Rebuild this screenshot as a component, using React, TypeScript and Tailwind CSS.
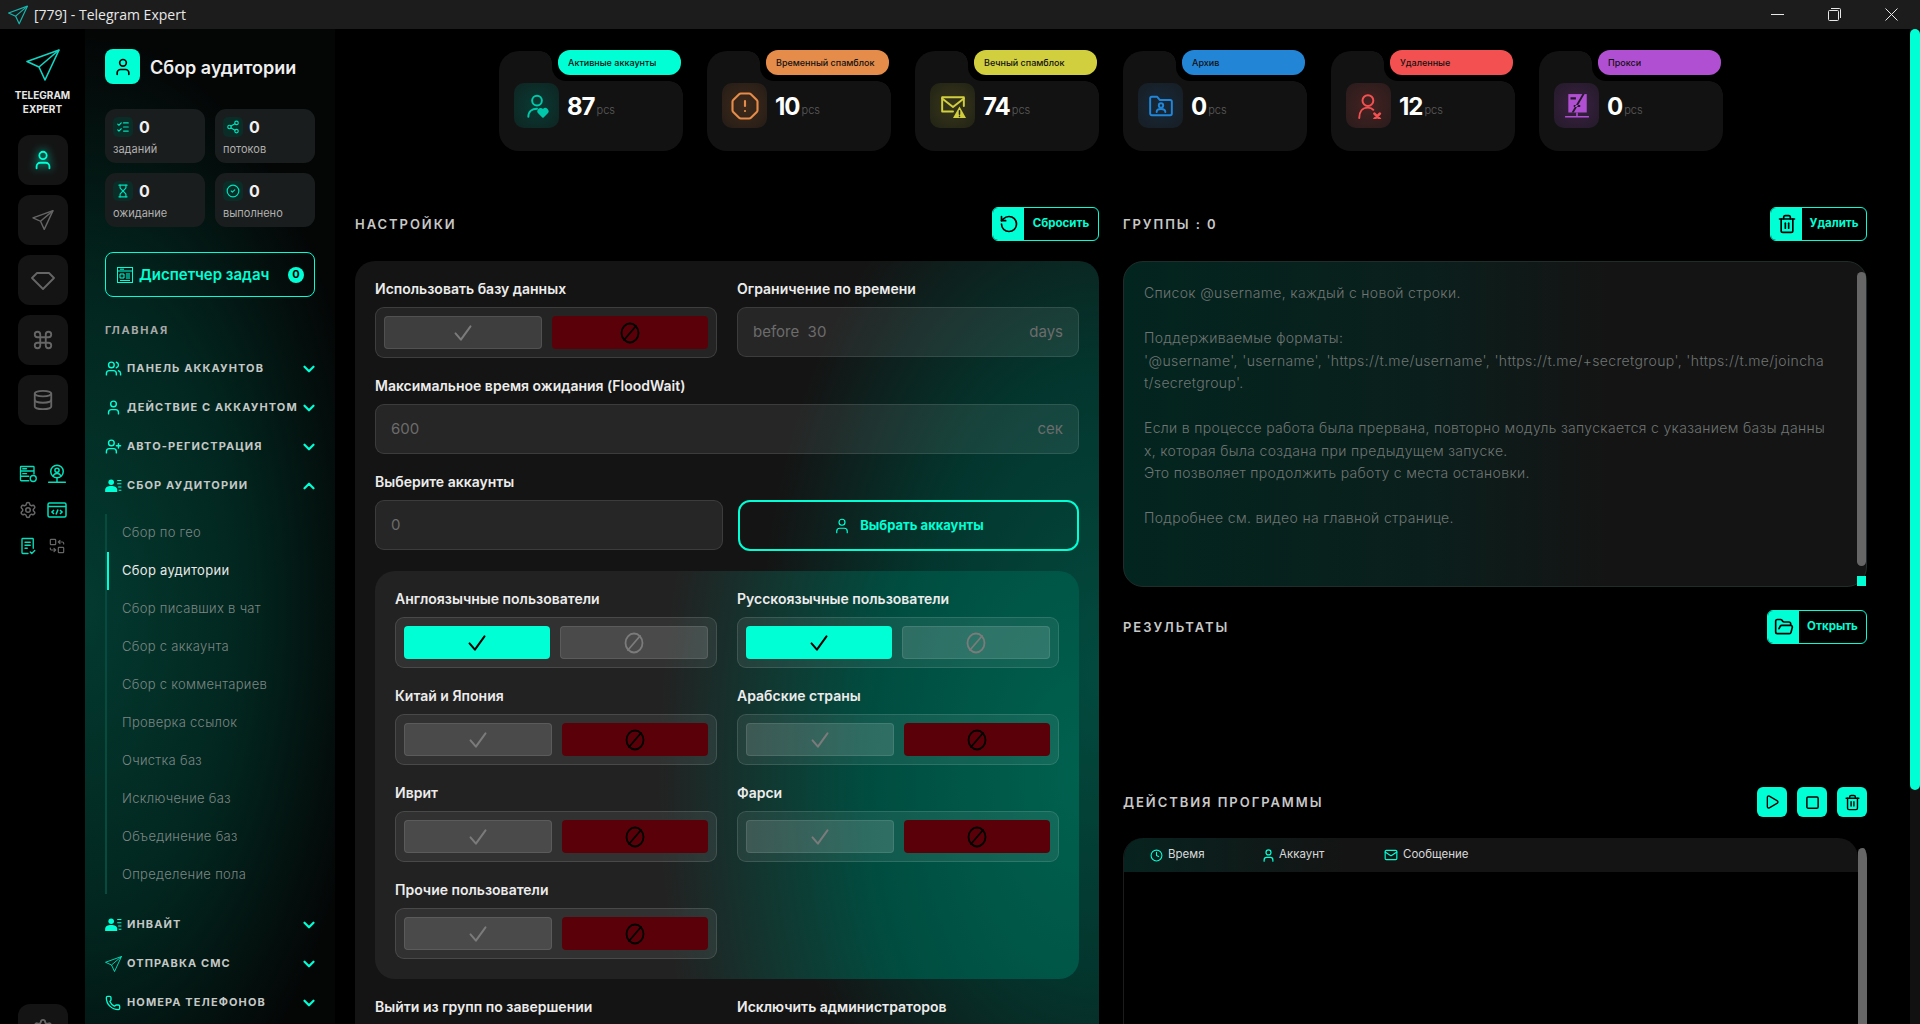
import { ReactNode } from "react";
import {
  ChevronDown,
  ChevronUp,
  CircleCheck,
  Clock,
  Command,
  Database,
  FolderOpen,
  Hourglass,
  ListChecks,
  Mail,
  OctagonAlert,
  Phone,
  Play,
  RotateCcw,
  Settings,
  Share2,
  Square,
  Trash2,
  User,
  UserPlus,
  Users,
} from "lucide-react";

function Plane({ className, strokeWidth = 1.6 }: { className?: string; strokeWidth?: number }) {
  return (
    <svg viewBox="0 0 34 32" fill="none" stroke="currentColor" strokeWidth={strokeWidth} strokeLinejoin="round" className={className}>
      <path d="M33 1 1 12.5 13 18l6 13L33 1Z" />
      <path d="M33 1 13 18" />
    </svg>
  );
}

function Ico({ children, className }: { children: ReactNode; className?: string }) {
  return (
    <svg viewBox="0 0 24 24" fill="none" stroke="currentColor" strokeWidth={1.8} strokeLinecap="round" strokeLinejoin="round" className={className}>
      {children}
    </svg>
  );
}

function BanIcon({ className }: { className?: string }) {
  return (
    <Ico className={className}>
      <ellipse cx="12" cy="12" rx="8.5" ry="9.5" />
      <path d="M18 5 6 19" />
    </Ico>
  );
}

function CheckIcon({ className }: { className?: string }) {
  return (
    <svg viewBox="0 0 24 24" fill="none" stroke="currentColor" strokeWidth={2.4} strokeLinecap="round" strokeLinejoin="round" className={className}>
      <path d="M3 12.5 9.5 20 21 4" />
    </svg>
  );
}

function UserList({ className }: { className?: string }) {
  return (
    <svg viewBox="0 0 18 14" fill="currentColor" className={className}>
      <circle cx="6.5" cy="3.5" r="3" />
      <path d="M0 14v-2.5C0 9 2.5 7.5 6.5 7.5S13 9 13 11.5V14Z" />
      <path d="M13 1h4.5v1.2H13zM13 4.5h4.5v1.2H13zM14 8h3.5v1.2H14zM14.5 11.5h3v1.2h-3z" />
    </svg>
  );
}

const stats = [
  {
    label: "Активные аккаунты",
    value: "87",
    pill: "bg-[#00ffd5]",
    box: "bg-[radial-gradient(circle,#0a3a33,#0e2422)]",
    color: "text-[#00c8aa]",
    icon: (
      <Ico>
        <circle cx="12" cy="7" r="4.5" />
        <path d="M4 22c0-5 3.5-7.5 8-7.5" />
        <path fill="currentColor" d="M17.5 22l-3.6-3.6a2.1 2.1 0 0 1 3-3l.6.6.6-.6a2.1 2.1 0 0 1 3 3Z" />
      </Ico>
    ),
  },
  {
    label: "Временный спамблок",
    value: "10",
    pill: "bg-[#e58c4a]",
    box: "bg-[radial-gradient(circle,#3f2a1a,#241c17)]",
    color: "text-[#e58c4a]",
    icon: <OctagonAlert strokeWidth={1.7} className="-m-[2px] h-[30px] w-[30px]" />,
  },
  {
    label: "Вечный спамблок",
    value: "74",
    pill: "bg-[#d2cf3f]",
    box: "bg-[radial-gradient(circle,#37371a,#222216)]",
    color: "text-[#d2cf3f]",
    icon: (
      <Ico>
        <path d="M12 17H2V4h20v8" />
        <path d="m2 5 10 8 10-8" />
        <path fill="currentColor" stroke="none" d="M18 12.5 24 23H12Z" />
        <path stroke="#222216" strokeWidth={1.4} d="M18 16.5v3M18 21.5v.2" />
      </Ico>
    ),
  },
  {
    label: "Архив",
    value: "0",
    pill: "bg-[#2285d6]",
    box: "bg-[radial-gradient(circle,#17293a,#171d23)]",
    color: "text-[#2285d6]",
    icon: (
      <Ico>
        <path d="M2 5a1.5 1.5 0 0 1 1.5-1.5h5l2.5 3h9.5A1.5 1.5 0 0 1 22 8v11a1.5 1.5 0 0 1-1.5 1.5h-17A1.5 1.5 0 0 1 2 19Z" />
        <circle cx="12" cy="11.5" r="2" />
        <path d="M8 17.5c0-2 1.5-2.8 4-2.8s4 .8 4 2.8" />
      </Ico>
    ),
  },
  {
    label: "Удаленные",
    value: "12",
    pill: "bg-[#f35151]",
    box: "bg-[radial-gradient(circle,#452222,#291b1b)]",
    color: "text-[#f35151]",
    icon: (
      <Ico>
        <circle cx="11" cy="7" r="5" />
        <path d="M3 23c0-6 3-9.500 8-9.500 2.500 0 4 .8 5 2" />
        <path strokeWidth={2.4} d="m17 19 5 5M22 19l-5 5" />
      </Ico>
    ),
  },
  {
    label: "Прокси",
    value: "0",
    pill: "bg-[#b14fd3]",
    box: "bg-[radial-gradient(circle,#3a2143,#241a29)]",
    color: "text-[#b14fd3]",
    icon: (
      <svg viewBox="0 0 24 24" fill="currentColor">
        <path d="M4 1h17v17H4Z" />
        <path fill="#241a29" d="M6 4h5v2H6zM9 11h6v2H9zM17 1l-10 17h2L19 1Z" />
        <path stroke="currentColor" strokeWidth="1.4" d="M1 22h22M12 18v4" />
      </svg>
    ),
  },
];

const tiles = [
  { value: "0", label: "заданий", icon: <ListChecks className="h-[14px] w-[14px]" /> },
  { value: "0", label: "потоков", icon: <Share2 className="h-[14px] w-[14px]" /> },
  { value: "0", label: "ожидание", icon: <Hourglass className="h-[14px] w-[14px]" /> },
  { value: "0", label: "выполнено", icon: <CircleCheck className="h-[14px] w-[14px]" /> },
];

const subItems = [
  "Сбор по гео",
  "Сбор аудитории",
  "Сбор писавших в чат",
  "Сбор с аккаунта",
  "Сбор с комментариев",
  "Проверка ссылок",
  "Очистка баз",
  "Исключение баз",
  "Объединение баз",
  "Определение пола",
];

function TitleBar() {
  return (
    <div className="flex h-[29px] shrink-0 items-center bg-[#1c1c1c] pl-[8px] font-['Open_Sans',sans-serif]">
      <Plane className="h-[20px] w-[20px] text-[#17b6ad]" strokeWidth={2} />
      <span className="ml-[6px] text-[14px] text-[#e8e8e8]">[779] - Telegram Expert</span>
      <div className="ml-auto flex text-[#e8e8e8]">
        <div className="flex h-[29px] w-[57px] items-center justify-center">
          <div className="h-px w-[13px] bg-[#e8e8e8]" />
        </div>
        <div className="flex h-[29px] w-[57px] items-center justify-center">
          <svg viewBox="0 0 13 13" fill="none" stroke="currentColor" className="h-[13px] w-[13px]">
            <rect x="0.5" y="2.500" width="10" height="10" rx="1" />
            <path d="M3 .5h8.500a1 1 0 0 1 1 1V10" />
          </svg>
        </div>
        <div className="flex h-[29px] w-[57px] items-center justify-center">
          <svg viewBox="0 0 13 13" stroke="currentColor" className="h-[13px] w-[13px]">
            <path d="m.5.5 12 12M12.500.5l-12 12" />
          </svg>
        </div>
      </div>
    </div>
  );
}

function RailButton({ children }: { children: ReactNode }) {
  return (
    <div className="flex h-[50px] w-[50px] shrink-0 items-center justify-center rounded-[12px] bg-[#141414] text-[#666666]">
      {children}
    </div>
  );
}

function Rail() {
  return (
    <div className="flex w-[85px] shrink-0 flex-col items-center overflow-hidden bg-black pt-[20px]">
      <Plane className="h-[32px] w-[34px] shrink-0 text-[#12d6c4]" />
      <div className="mt-[7px] shrink-0 text-center text-[10px] leading-[14px] font-bold text-[#e6e6e6]">
        TELEGRAM
        <br />
        EXPERT
      </div>
      <div className="mt-[19px] flex shrink-0 flex-col gap-[10px]">
        <RailButton>
          <User className="h-[22px] w-[22px] text-[#00ffd5] drop-shadow-[0_0_5px_#00ffd5]" />
        </RailButton>
        <RailButton>
          <Plane className="h-[20px] w-[22px]" strokeWidth={2.2} />
        </RailButton>
        <RailButton>
          <Ico className="h-[24px] w-[24px]">
            <path d="M6 5h12l5 5-11 11L1 10Z" />
          </Ico>
        </RailButton>
        <RailButton>
          <Command className="h-[22px] w-[22px]" />
        </RailButton>
        <RailButton>
          <Database className="h-[22px] w-[22px]" />
        </RailButton>
      </div>
      <div className="mt-[31px] grid shrink-0 grid-cols-[28px_28px] justify-center gap-x-px">
        <div className="flex h-[36px] items-center justify-center text-[#00e0bb]">
          <Ico className="h-[18px] w-[18px]">
            <rect x="2" y="2" width="18" height="6" rx="1" />
            <path d="M20 12V8M2 8v6a1 1 0 0 0 1 1h10M2 15v5a1 1 0 0 0 1 1h10M5 5h5M5 11.500h5" />
            <circle cx="19" cy="18" r="4" />
          </Ico>
        </div>
        <div className="flex h-[36px] items-center justify-center text-[#00e0bb]">
          <Ico className="h-[20px] w-[20px]">
            <circle cx="12" cy="9" r="7.500" />
            <circle cx="12" cy="7.500" r="2.500" />
            <path d="M7.500 14c1-2 2.500-2.500 4.500-2.500s3.500.5 4.500 2.500M12 17v4M2 22h20" />
          </Ico>
        </div>
        <div className="flex h-[36px] items-center justify-center text-[#666666]">
          <Settings className="h-[18px] w-[18px]" />
        </div>
        <div className="flex h-[36px] items-center justify-center text-[#00e0bb]">
          <svg viewBox="0 0 20 16" fill="none" stroke="currentColor" strokeWidth={1.5} className="h-[16px] w-[20px]">
            <rect x="1" y="1" width="18" height="14" rx="1.500" />
            <path d="M1 4.500h18" />
            <path strokeWidth={1.6} d="M7 8 5 10l2 2M13 8l2 2-2 2M11 7.500l-2 5" />
          </svg>
        </div>
        <div className="flex h-[36px] items-center justify-center text-[#00e0bb]">
          <Ico className="h-[18px] w-[18px]">
            <path d="M12 22H5a1 1 0 0 1-1-1V3a1 1 0 0 1 1-1h13a1 1 0 0 1 1 1v12" />
            <path d="M8 7h7M8 11h7M8 15h3M15 20l2 2 4-4" />
          </Ico>
        </div>
        <div className="flex h-[36px] items-center justify-center text-[#666666]">
          <Ico className="h-[16px] w-[16px]">
            <rect x="2" y="2" width="8" height="8" rx="1" />
            <rect x="14" y="14" width="8" height="8" rx="1" />
            <path d="M14 6h6a2 2 0 0 1 2 2v1M14 6l2.500-2.500M14 6l2.500 2.500M10 18H4a2 2 0 0 1-2-2v-1M10 18l-2.500-2.500M10 18l-2.500 2.500" />
          </Ico>
        </div>
      </div>
      <div className="mt-[440px] shrink-0">
        <RailButton>
          <Settings className="h-[22px] w-[22px]" />
        </RailButton>
      </div>
    </div>
  );
}

function MenuRow({ icon, label, open }: { icon: ReactNode; label: string; open?: boolean }) {
  return (
    <div className="flex h-[39px] items-center text-[#00ffd5]">
      <div className="flex w-[22px] shrink-0 items-center">{icon}</div>
      <span className="text-[11px] font-bold tracking-[0.1em] whitespace-nowrap text-[#c4c8c6]">{label}</span>
      <div className="ml-auto">
        {open ? <ChevronUp strokeWidth={3} className="h-[18px] w-[18px]" /> : <ChevronDown strokeWidth={3} className="h-[18px] w-[18px]" />}
      </div>
    </div>
  );
}

function Sidebar() {
  return (
    <div className="w-[250px] shrink-0 bg-[#040606] bg-[radial-gradient(ellipse_290px_570px_at_0%_58%,#033a30_0%,#02261f_55%,#040606_100%)] pt-[20px] pr-[17px] pl-[20px]">
      <div className="flex items-center">
        <div className="flex h-[35px] w-[35px] items-center justify-center rounded-[8px] bg-[#00ffd5] text-black">
          <User className="h-[20px] w-[20px]" />
        </div>
        <span className="mt-[2px] ml-[10px] text-[18px] font-semibold whitespace-nowrap text-[#efefef]">Сбор аудитории</span>
      </div>
      <div className="mt-[25px] grid w-[210px] grid-cols-2 gap-[10px]">
        {tiles.map((t) => (
          <div key={t.label} className="h-[54px] rounded-[11px] bg-[#1a1d1d] px-[8px] pt-[8px]">
            <div className="flex items-center">
              <div className="flex h-[20px] w-[20px] items-center justify-center rounded-[5px] bg-[#0a2d27] text-[#00e0bb]">{t.icon}</div>
              <span className="ml-[6px] text-[16px] leading-[20px] font-bold text-[#f0f0f0]">{t.value}</span>
            </div>
            <div className="mt-[5px] text-[11px] leading-[14px] text-[#b0b0b0]">{t.label}</div>
          </div>
        ))}
      </div>
      <div className="mt-[25px] flex h-[45px] w-[210px] items-center rounded-[8px] border border-[#00ffd5] pr-[10px] pl-[11px] text-[#00ffd5]">
        <svg viewBox="0 0 16 16" fill="none" stroke="currentColor" className="h-[16px] w-[16px]">
          <rect x="0.5" y="0.500" width="15" height="15" />
          <path d="M.5 4h15M3 2.200h4M3 7h4v4H3zM9 7h4M9 9h4M9 11h4M3 13.500h10" />
        </svg>
        <span className="mt-[2px] ml-[6px] text-[15px] font-semibold whitespace-nowrap">Диспетчер задач</span>
        <div className="ml-auto flex h-[16px] w-[16px] items-center justify-center rounded-full bg-[#00ffd5] text-[11px] font-bold text-black">0</div>
      </div>
      <div className="mt-[26px] text-[11px] leading-[14px] font-bold tracking-[0.15em] text-[#a8a8a8]">ГЛАВНАЯ</div>
      <div className="mt-[12px]">
        <MenuRow label="ПАНЕЛЬ АККАУНТОВ" icon={<Users className="h-[17px] w-[17px]" />} />
        <MenuRow label="ДЕЙСТВИЕ С АККАУНТОМ" icon={<User className="h-[17px] w-[17px]" />} />
        <MenuRow label="АВТО-РЕГИСТРАЦИЯ" icon={<UserPlus className="h-[17px] w-[17px]" />} />
        <MenuRow label="СБОР АУДИТОРИИ" open icon={<UserList className="h-[13px] w-[17px]" />} />
      </div>
      <div className="mt-[9px] border-l-2 border-[#074a3e]">
        {subItems.map((s) => (
          <div
            key={s}
            className={
              s === "Сбор аудитории"
                ? "flex h-[38px] items-center border-l-2 border-[#00ffd5] pl-[13px] text-[13px] tracking-[0.3px] whitespace-nowrap text-[#e8e8e8]"
                : "flex h-[38px] items-center border-l-2 border-transparent pl-[13px] text-[13px] font-light tracking-[0.3px] whitespace-nowrap text-[#7d8683]"
            }
          >
            {s}
          </div>
        ))}
      </div>
      <div className="mt-[11px]">
        <MenuRow label="ИНВАЙТ" icon={<UserList className="h-[13px] w-[17px]" />} />
        <MenuRow label="ОТПРАВКА СМС" icon={<Plane className="h-[16px] w-[17px]" />} />
        <MenuRow label="НОМЕРА ТЕЛЕФОНОВ" icon={<Phone className="h-[16px] w-[16px]" />} />
      </div>
    </div>
  );
}

function StatCard({ s }: { s: (typeof stats)[number] }) {
  return (
    <div className="relative h-[100px] w-[184px] shrink-0 rounded-[20px] bg-[#121212] pt-[32px] pl-[15px]">
      <div className="absolute top-0 right-[131px] h-[12px] w-[12px] bg-[radial-gradient(circle_at_0_100%,transparent_11.5px,#000_12px)]" />
      <div className="absolute top-[30px] right-0 h-[14px] w-[14px] bg-[radial-gradient(circle_at_0_100%,transparent_13.5px,#000_14px)]" />
      <div className="absolute -top-px right-0 flex h-[31px] w-[131px] items-start rounded-bl-[14px] bg-black pl-[6px]">
        <div className={"flex h-[25px] w-[123px] items-center rounded-[12px] pl-[10px] text-[9px] font-medium whitespace-nowrap text-[#111111] " + s.pill}>
          {s.label}
        </div>
      </div>
      <div className="flex items-center">
        <div className={"flex h-[45px] w-[45px] items-center justify-center rounded-[10px] " + s.box}>
          <div className={"h-[26px] w-[26px] " + s.color}>{s.icon}</div>
        </div>
        <span className="mt-[2px] ml-[8px] text-[24px] leading-[30px] font-bold tracking-[-1px] text-white">{s.value}</span>
        <span className="mt-[9px] ml-[2px] text-[11px] font-light text-[#5c5c5c]">pcs</span>
      </div>
    </div>
  );
}

function ActionButton({ icon, label, width }: { icon: ReactNode; label: string; width: string }) {
  return (
    <div className={"flex h-[34px] items-center overflow-hidden rounded-[6px] border border-[#00ffd5] " + width}>
      <div className="flex h-full w-[31px] shrink-0 items-center justify-center bg-[#00ffd5] text-black">{icon}</div>
      <span className="flex-1 text-center text-[11.500px] font-bold text-[#00ffd5]">{label}</span>
    </div>
  );
}

function SectionHead({ title, children }: { title: string; children?: ReactNode }) {
  return (
    <div className="flex h-[34px] items-center justify-between">
      <span className="mt-[2px] text-[13px] font-semibold tracking-[0.15em] text-[#c8c8c8]">{title}</span>
      {children}
    </div>
  );
}

function Toggle({ on }: { on?: boolean }) {
  return (
    <div className="flex h-[51px] gap-[10px] rounded-[9px] border border-white/12 bg-white/7 px-[8px] py-[8px]">
      <div
        className={
          on
            ? "flex flex-1 items-center justify-center rounded-[4px] bg-[#00ffd5] text-black"
            : "flex flex-1 items-center justify-center rounded-[4px] border border-white/10 bg-white/12 text-[#7b7b7b]"
        }
      >
        <CheckIcon className="h-[20px] w-[20px]" />
      </div>
      <div
        className={
          on
            ? "flex flex-1 items-center justify-center rounded-[4px] border border-white/10 bg-white/12 text-[#7b7b7b]"
            : "flex flex-1 items-center justify-center rounded-[4px] bg-[#5a0008] text-black"
        }
      >
        <BanIcon className="h-[24px] w-[24px]" />
      </div>
    </div>
  );
}

function Label({ children }: { children: ReactNode }) {
  return <div className="mb-[8px] h-[20px] text-[14px] leading-[20px] font-semibold whitespace-nowrap text-[#ececec]">{children}</div>;
}

function Field({ left, right }: { left: string; right?: string }) {
  return (
    <div className="flex h-[50px] items-center justify-between rounded-[9px] border border-white/10 bg-white/8 px-[15px] text-[15px] text-[#6c6c6c]">
      <span className="whitespace-pre">{left}</span>
      {right && <span>{right}</span>}
    </div>
  );
}

function LangCell({ label, on }: { label: string; on?: boolean }) {
  return (
    <div>
      <Label>{label}</Label>
      <Toggle on={on} />
    </div>
  );
}

function SettingsPanel() {
  return (
    <div className="w-[744px] shrink-0">
      <SectionHead title="НАСТРОЙКИ">
        <ActionButton icon={<RotateCcw className="h-[20px] w-[20px]" />} label="Сбросить" width="w-[107px]" />
      </SectionHead>
      <div className="mt-[20px] rounded-[20px] bg-[#141414] bg-[radial-gradient(ellipse_340px_560px_at_100%_50%,#034a3e_0%,#03352d_55%,#141414_100%)] px-[20px] pt-[18px] pb-[60px]">
        <div className="grid grid-cols-2 gap-x-[20px]">
          <div>
            <Label>Использовать базу данных</Label>
            <Toggle />
          </div>
          <div>
            <Label>Ограничение по времени</Label>
            <Field left="before  30" right="days" />
          </div>
        </div>
        <div className="mt-[18px]">
          <Label>Максимальное время ожидания (FloodWait)</Label>
          <Field left="600" right="сек" />
        </div>
        <div className="mt-[18px]">
          <Label>Выберите аккаунты</Label>
          <div className="flex gap-[15px]">
            <div className="w-[348px]">
              <Field left="0" />
            </div>
            <div className="flex h-[51px] flex-1 items-center justify-center gap-[9px] rounded-[12px] border-2 border-[#00ffd5] text-[13px] font-bold text-[#00ffd5]">
              <User className="h-[18px] w-[18px]" strokeWidth={1.6} />
              Выбрать аккаунты
            </div>
          </div>
        </div>
        <div className="mt-[20px] grid grid-cols-2 gap-x-[20px] gap-y-[18px] rounded-[20px] bg-[#222222] bg-[radial-gradient(ellipse_420px_720px_at_100%_50%,#00614f_0%,#004d40_50%,#222222_100%)] px-[20px] pt-[18px] pb-[20px]">
          <LangCell label="Англоязычные пользователи" on />
          <LangCell label="Русскоязычные пользователи" on />
          <LangCell label="Китай и Япония" />
          <LangCell label="Арабские страны" />
          <LangCell label="Иврит" />
          <LangCell label="Фарси" />
          <LangCell label="Прочие пользователи" />
        </div>
        <div className="mt-[18px] grid grid-cols-2 gap-x-[20px]">
          <Label>Выйти из групп по завершении</Label>
          <Label>Исключить администраторов</Label>
        </div>
      </div>
    </div>
  );
}

function RightColumn() {
  return (
    <div className="ml-[24px] w-[744px] shrink-0">
      <SectionHead title="ГРУППЫ : 0">
        <ActionButton icon={<Trash2 className="h-[20px] w-[20px]" />} label="Удалить" width="w-[97px]" />
      </SectionHead>
      <div className="mt-[20px] flex h-[326px] rounded-[20px] border border-[#1f2d2a] bg-[linear-gradient(90deg,#03251f_0%,#0a1f1c_40%,#141414_65%)]">
        <div className="flex-1 pt-[20px] pl-[20px] text-[14px] leading-[22.5px] font-light tracking-[0.33px] whitespace-pre text-[#6f7573]">
          <div className="h-[22.5px]">Список @username, каждый с новой строки.</div>
          <div className="h-[22.5px]" />
          <div className="h-[22.5px]">Поддерживаемые форматы:</div>
          <div className="h-[22.5px] tracking-[0.37px]">'@username', 'username', 'https://t.me/username', 'https://t.me/+secretgroup', 'https://t.me/joincha</div>
          <div className="h-[22.5px] tracking-[0.37px]">t/secretgroup'.</div>
          <div className="h-[22.5px]" />
          <div className="h-[22.5px]">Если в процессе работа была прервана, повторно модуль запускается с указанием базы данны</div>
          <div className="h-[22.5px]">х, которая была создана при предыдущем запуске.</div>
          <div className="h-[22.5px]">Это позволяет продолжить работу с места остановки.</div>
          <div className="h-[22.5px]" />
          <div className="h-[22.5px]">Подробнее см. видео на главной странице.</div>
        </div>
        <div className="flex w-[9px] flex-col">
          <div className="mt-[10px] h-[295px] rounded-full bg-[#666666]" />
          <div className="mt-[10px] h-[10px] bg-[#00ffd5]" />
        </div>
      </div>
      <div className="mt-[23px]">
        <SectionHead title="РЕЗУЛЬТАТЫ">
          <ActionButton icon={<FolderOpen className="h-[20px] w-[20px]" />} label="Открыть" width="w-[100px]" />
        </SectionHead>
      </div>
      <div className="mt-[143px] flex h-[30px] items-center justify-between">
        <span className="mt-[2px] text-[13px] font-semibold tracking-[0.15em] text-[#c8c8c8]">ДЕЙСТВИЯ ПРОГРАММЫ</span>
        <div className="flex gap-[10px]">
          <div className="flex h-[30px] w-[30px] items-center justify-center rounded-[6px] bg-[#00ffd5] text-black">
            <Play className="h-[16px] w-[16px]" />
          </div>
          <div className="flex h-[30px] w-[30px] items-center justify-center rounded-[6px] bg-[#00ffd5] text-black">
            <Square className="h-[15px] w-[15px]" strokeWidth={2.4} />
          </div>
          <div className="flex h-[30px] w-[30px] items-center justify-center rounded-[6px] bg-[#00ffd5] text-black">
            <Trash2 className="h-[17px] w-[17px]" />
          </div>
        </div>
      </div>
      <div className="mt-[21px] flex h-[400px] overflow-hidden rounded-t-[20px] border-l border-[#1c1c1c]">
        <div className="flex-1">
          <div className="flex h-[34px] items-center rounded-tr-[20px] bg-[linear-gradient(90deg,#07231f_0%,#141414_30%)] text-[11.500px] text-[#d8d8d8]">
            <div className="flex w-[137px] items-center pl-[26px]">
              <Clock className="h-[13px] w-[13px] text-[#00ffd5]" />
              <span className="ml-[5px]">Время</span>
            </div>
            <div className="flex w-[123px] items-center">
              <User className="h-[15px] w-[15px] text-[#00ffd5]" />
              <span className="ml-[3px]">Аккаунт</span>
            </div>
            <div className="flex items-center">
              <Mail className="h-[14px] w-[14px] text-[#00ffd5]" />
              <span className="ml-[5px]">Сообщение</span>
            </div>
          </div>
        </div>
        <div className="mt-[10px] w-[9px] rounded-full bg-[#666666]" />
      </div>
    </div>
  );
}

export default function App() {
  return (
    <div className="flex h-screen flex-col overflow-hidden bg-black font-['Inter',sans-serif]">
      <TitleBar />
      <div className="flex min-h-0 flex-1">
        <Rail />
        <Sidebar />
        <div className="min-w-0 flex-1 overflow-hidden">
          <div className="flex gap-[24px] pt-[22px] pl-[164px]">
            {stats.map((s) => (
              <StatCard key={s.label} s={s} />
            ))}
          </div>
          <div className="mt-[56px] flex pl-[20px]">
            <SettingsPanel />
            <RightColumn />
          </div>
        </div>
        <div className="w-[10px] shrink-0 bg-[#111111]">
          <div className="h-[761px] rounded-full bg-[#00ffd5]" />
        </div>
      </div>
    </div>
  );
}
